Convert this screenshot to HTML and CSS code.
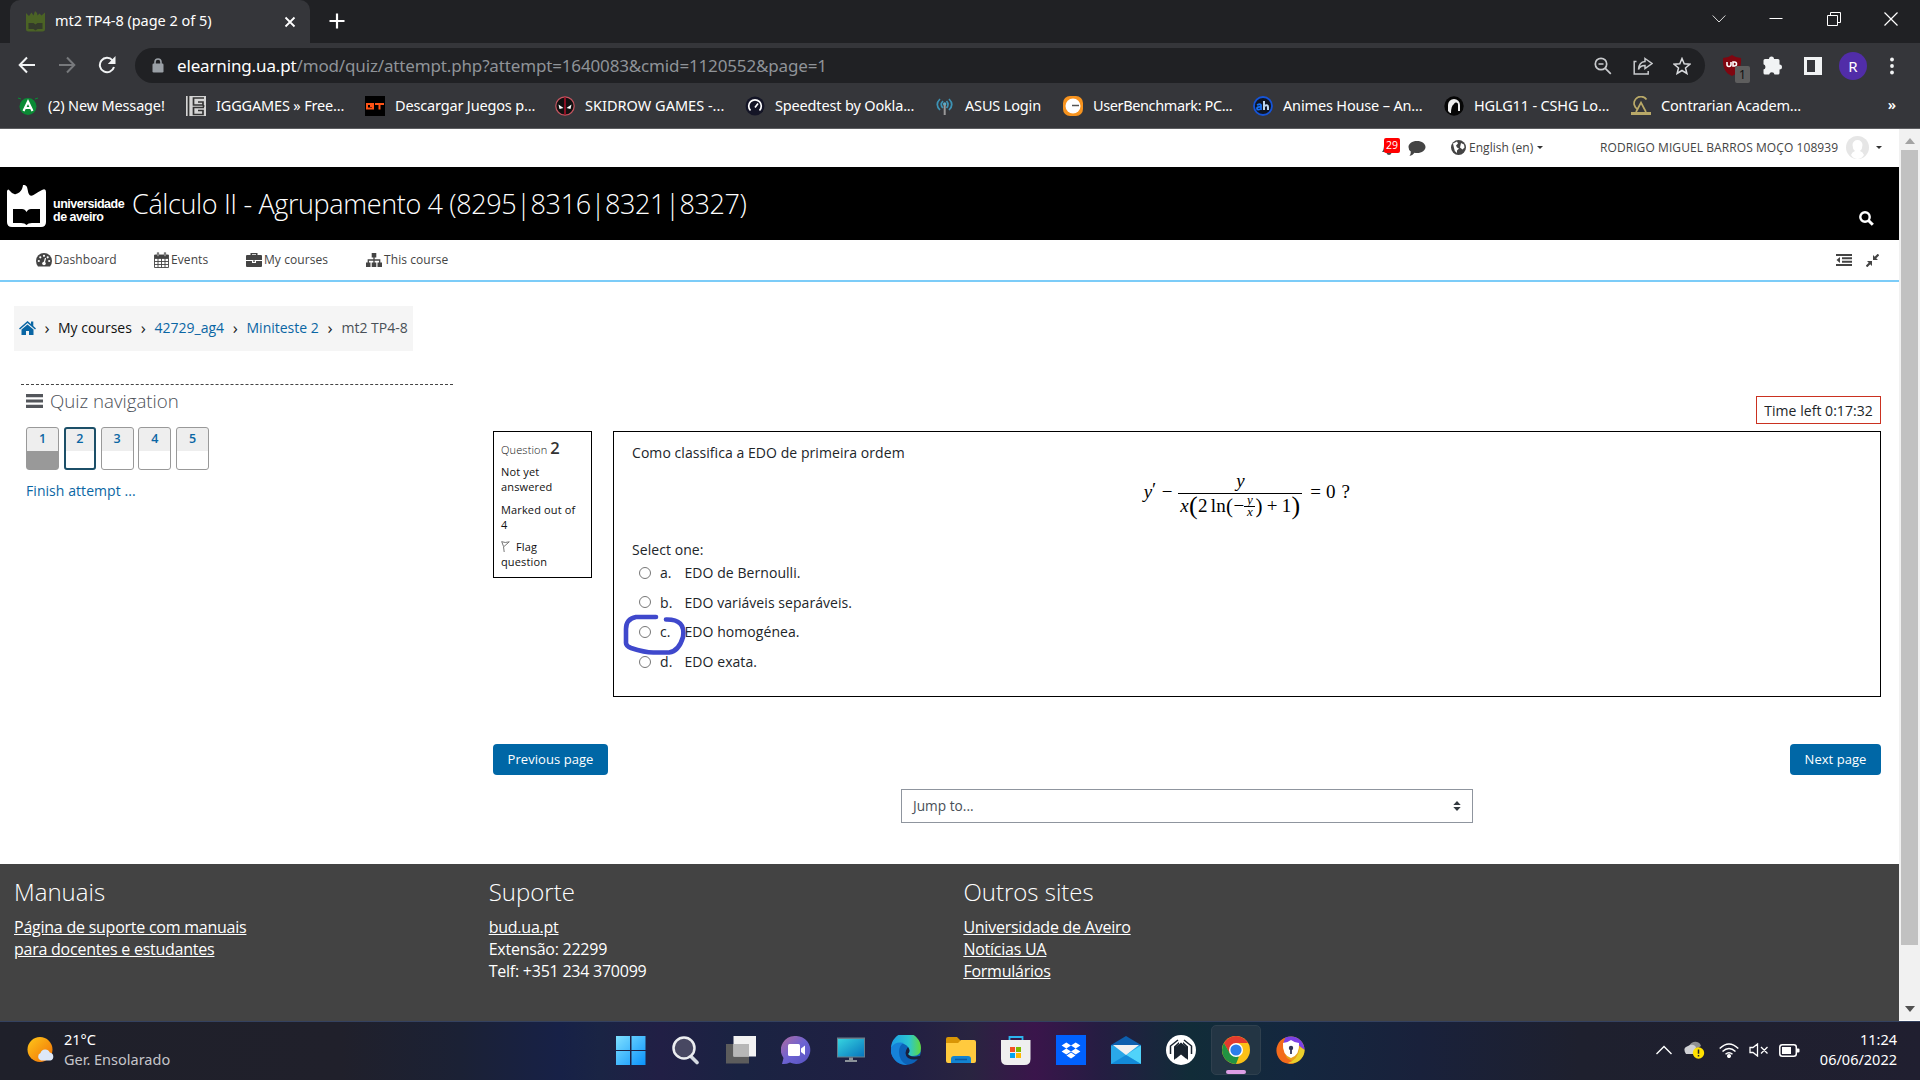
FILE: index.html
```html
<!DOCTYPE html>
<html lang="en">
<head>
<meta charset="utf-8">
<title>mt2 TP4-8 (page 2 of 5)</title>
<link rel="stylesheet" href="styles.css">
</head>
<body>
<div class="browser">
  <div class="tabstrip">
    <div class="tab">
      <svg class="favicon" width="21" height="21" viewBox="0 0 40 42"><path fill="#4b6325" d="M1 4l6 6 5-7 4 6 3-9 4 4 1 5 4-4 4 4 7-6v33q0 5-5 5H6q-5 0-5-5z"/><path fill="#343b2b" d="M6 24h10l4 3 4-3h10v12H24l-4 3-4-3H6z"/></svg>
      <span class="tab-title">mt2 TP4-8 (page 2 of 5)</span>
      <svg class="tab-close" width="12" height="12" viewBox="0 0 12 12"><path d="M1.500 1.500l9 9m0-9l-9 9" stroke="#fff" stroke-width="1.800"/></svg>
    </div>
    <svg class="newtab" width="16" height="16" viewBox="0 0 16 16"><path d="M8 .5v15M.5 8h15" stroke="#fff" stroke-width="2.200"/></svg>
    <div class="wincontrols">
      <svg width="14" height="14" viewBox="0 0 14 14"><path d="M.7 3.500l6.300 6.500 6.300-6.500" fill="none" stroke="#ddd"/></svg>
      <svg width="14" height="14" viewBox="0 0 14 14"><path d="M.5 6.500h13" stroke="#fff"/></svg>
      <svg width="14" height="14" viewBox="0 0 14 14"><path d="M.5 3.500h10v10H.5zM3.500 3.500V.5h10v10h-3" fill="none" stroke="#fff"/></svg>
      <svg width="14" height="14" viewBox="0 0 14 14"><path d="M.5.5l13 13m0-13l-13 13" stroke="#fff" stroke-width="1.200"/></svg>
    </div>
  </div>
  <div class="toolbar">
    <div class="navbtns">
      <svg width="18" height="18" viewBox="0 0 18 18"><path d="M17 9H2M9 1.500L1.700 9 9 16.500" fill="none" stroke="#f1f3f4" stroke-width="2"/></svg>
      <svg width="18" height="18" viewBox="0 0 18 18"><path d="M1 9h15M9 1.500L16.300 9 9 16.500" fill="none" stroke="#77797c" stroke-width="2"/></svg>
      <svg width="18" height="18" viewBox="0 0 18 18"><path d="M14.500 4.300A7.200 7.200 0 1 0 16 11" fill="none" stroke="#f1f3f4" stroke-width="2"/><path d="M17.500 0v8H9.800z" fill="#f1f3f4"/></svg>
    </div>
    <div class="omnibox">
      <svg class="lock" width="12" height="15" viewBox="0 0 12 15"><path d="M3 6V4a3 3 0 0 1 6 0v2" fill="none" stroke="#9aa0a6" stroke-width="1.600"/><rect x=".5" y="5.500" width="11" height="9" rx="1.200" fill="#9aa0a6"/></svg>
      <span class="url">elearning.ua.pt<span class="url-path">/mod/quiz/attempt.php?attempt=1640083&amp;cmid=1120552&amp;page=1</span></span>
      <span class="omni-icons">
        <svg width="18" height="18" viewBox="0 0 18 18" fill="none" stroke="#c8cacd" stroke-width="1.700"><circle cx="7" cy="7" r="5.700"/><path d="M11.300 11.300l5.500 5.500M4.500 7h5"/></svg>
        <svg width="20" height="18" viewBox="0 0 20 18" fill="none" stroke="#c8cacd" stroke-width="1.500"><path d="M3.500 4.500H1.200v12.500h14V14"/><path d="M12 1.500l7 5-7 5V8.500q-5 0-6.500 4Q6 5 12 4.500z"/></svg>
        <svg width="18" height="18" viewBox="0 0 18 18" fill="none" stroke="#d8dadd" stroke-width="1.500"><path d="M9 1.500l2.200 5.300 5.700.4-4.400 3.700 1.400 5.600L9 13.500l-4.900 3 1.400-5.600L1.100 7.200l5.700-.4z"/></svg>
      </span>
    </div>
    <div class="exts">
      <div class="ublock">
        <svg width="20" height="21" viewBox="0 0 20 21"><path fill="#800610" d="M10 0q4 3 9 3 1 14-9 18Q0 17 1 3q5 0 9-3z"/><path d="M5 7v2.500a2 2 0 0 0 4 0V7m2 0v4h1.500a2 2 0 0 0 0-4H11z" fill="none" stroke="#fff" stroke-width="1.600"/></svg>
        <span class="ublock-badge">1</span>
      </div>
      <svg class="puzzle" width="19" height="19" viewBox="0 0 19 19"><path fill="#f1f3f4" d="M6 3a2.500 2.500 0 0 1 5 0h4q1.500 0 1.500 1.500V8.500a2.500 2.500 0 0 1 0 5V17q0 1.500-1.500 1.500h-3.500a2.700 2.700 0 0 0-5.300 0H2Q.5 18.500.5 17v-3.500a2.700 2.700 0 0 0 0-5.200V4.500Q.5 3 2 3z"/></svg>
      <svg class="sidepanel" width="18" height="18" viewBox="0 0 18 18"><path fill="#f1f3f4" fill-rule="evenodd" d="M0 0h18v18H0zM3 3v12h8V3z"/></svg>
      <span class="profile">R</span>
      <svg class="menu-dots" width="4" height="18" viewBox="0 0 4 18" fill="#f1f3f4"><circle cx="2" cy="2.500" r="1.900"/><circle cx="2" cy="9" r="1.900"/><circle cx="2" cy="15.500" r="1.900"/></svg>
    </div>
  </div>
  <div class="bookmarks">
    <a class="bm w168"><svg viewBox="0 0 20 20"><circle cx="10" cy="10.500" r="8.500" fill="#0b8a35"/><path d="M0 2l3 1M20 2l-3 1" stroke="#0b8a35"/><path d="M5.500 15L10 5.500 14.500 15M7.500 12h5" fill="none" stroke="#fff" stroke-width="2.200"/></svg><span>(2) New Message!</span></a>
    <a class="bm w179"><svg viewBox="0 0 20 20"><path fill="#d4d4d4" d="M0 0h20v20H0z"/><path d="M2.500 0v20M18 2H7.500v7H17V6h-5M17.500 9v2M18 11.500H7.500v7H17v-4h-5" fill="none" stroke="#333" stroke-width="1.700"/></svg><span>IGGGAMES » Free...</span></a>
    <a class="bm w190"><svg viewBox="0 0 20 20"><path d="M0 0h20v20H0z"/><path d="M9 8H2v4.500h6V10H5M10 8h9M14.500 8v5.500" fill="none" stroke="#ff5316" stroke-width="2"/></svg><span>Descargar Juegos p...</span></a>
    <a class="bm w190 tight"><svg viewBox="0 0 20 20"><circle cx="10" cy="10" r="9.200" fill="#111" stroke="#c45560" stroke-width="1.200"/><path d="M10 1v18" stroke="#b0102a" stroke-width="1.500"/><path d="M3.500 8.500l5 3.500-4 1zM16.500 8.500l-5 3.500 4 1z" fill="#fff"/></svg><span class="wide">SKIDROW GAMES -...</span></a>
    <a class="bm w190"><svg viewBox="0 0 20 20"><circle cx="10" cy="10" r="9.500" fill="#141526"/><path d="M5.500 14.500a6.300 6.300 0 1 1 9 0M10 11.500l3-4" fill="none" stroke="#fff" stroke-width="1.700"/></svg><span>Speedtest by Ookla...</span></a>
    <a class="bm w128"><svg viewBox="0 0 20 20" fill="none" stroke="#3d93b5" stroke-width="1.700"><path d="M5 3Q-.5 8.500 5 14M8 5Q4.500 8.500 8 12M14 3q5.500 5.500 0 11M11.500 5q3 3.500 0 7"/><circle cx="9.700" cy="8" r="1.700" fill="#5ba9c4" stroke="none"/><path d="M9.700 9v10" stroke="#999" stroke-width="2"/></svg><span>ASUS Login</span></a>
    <a class="bm w190"><svg viewBox="0 0 20 20"><rect width="20" height="20" rx="7" fill="#f7931e"/><circle cx="10" cy="10" r="7.500" fill="#fff"/><path d="M9 9.500h7" stroke="#555" stroke-width="1.500"/></svg><span class="narrow">UserBenchmark: PC...</span></a>
    <a class="bm w191"><svg viewBox="0 0 20 20"><circle cx="10" cy="10" r="9" fill="#101522" stroke="#1554d8" stroke-width="1.800"/><path d="M4 9q3-1.500 4 0v5M8 11q-4-.5-4 1.500T8 13" fill="none" stroke="#176ff0" stroke-width="1.800"/><path d="M11 5v9M11 10q4-2 4 1v3" fill="none" stroke="#bed6ef" stroke-width="2"/></svg><span>Animes House – An...</span></a>
    <a class="bm w187"><svg viewBox="0 0 20 20"><circle cx="10" cy="10" r="9.700" fill="#060606"/><path d="M4 15V9a6 6 0 0 1 12 0v6h-2V9a2 2 0 0 0-4-1q-3 2-3 9H6z" fill="#eee"/></svg><span>HGLG11 - CSHG Lo...</span></a>
    <a class="bm"><svg viewBox="0 0 20 20" fill="none" stroke="#b9a968"><path d="M15.500 3.500A6.800 6.800 0 1 0 7 13.500" stroke-width="1.700"/><path d="M5 16l5-9.500L15 16" stroke-width="1.700"/><path d="M0 17.500h20" stroke-width="3"/></svg><span>Contrarian Academ...</span></a>
    <span class="bm-more">»</span>
  </div>
</div>

<div class="viewport">
<div class="page">
  <div class="userbar">
    <div class="bell">
      <svg width="14" height="16" viewBox="0 0 14 16"><path fill="#4a4a4a" d="M7 0q5 0 5 6 0 5 2 7H0q2-2 2-7 0-6 5-6zM4.500 14h5Q9 16 7 16t-2.500-2z"/></svg>
      <span class="bell-count">29</span>
    </div>
    <svg class="comment" width="18" height="15" viewBox="0 0 18 15"><path fill="#444" d="M9 0c5 0 8.500 2.700 8.500 6S14 12 9 12q-1.500 0-2.500-.3Q4.500 14.500 1.500 15q1.500-2 1.300-4.500Q.5 9 .5 6C.5 2.700 4 0 9 0z"/></svg>
    <svg class="globe" width="15" height="15" viewBox="0 0 15 15"><circle cx="7.500" cy="7.500" r="7.500" fill="#444"/><path fill="#fff" d="M2 3.500l4-2 1 2-2 2 1 2 2 1-2 2v2.500Q3 11 3 8zM10 3l3 1.500.5 3-2 2-2.500-2z"/></svg>
    <span class="lang">English (en)</span><i class="caret"></i>
    <span class="username">RODRIGO MIGUEL BARROS MOÇO 108939</span>
    <svg class="avatar" width="23" height="23" viewBox="0 0 23 23"><circle cx="11.500" cy="11.500" r="11.500" fill="#e6e6e6"/><path fill="#fff" d="M11.500 4a5 5 0 0 1 5 5q0 4-2.500 6 3 1 4 4-2.500 4-6.500 4T5 19q1-3 4-4-2.500-2-2.500-6a5 5 0 0 1 5-5z"/></svg>
    <i class="caret"></i>
  </div>
  <header class="banner">
    <svg class="ua-mark" width="39" height="42" viewBox="0 0 39 42"><path fill="#fff" d="M0 6q1-3 3 0 3 4 6 3 4-1 6-5Q16 1 16 0q4-.5 4.500 4 .5 4 2 6 1.500 1.500 4 0Q31 7 35 5q4-2 4 2v30q0 5-5 5H5q-5 0-5-5z"/><path d="M6 24h9q3 0 4.500 3Q21 24 24 24h9v14h-8q-4 0-5.500 2-1.500-2-5.500-2H6z"/></svg>
    <div class="ua-name">universidade<br>de aveiro</div>
    <h1>Cálculo II - Agrupamento 4 (8295|8316|8321|8327)</h1>
    <svg class="search" width="15" height="15" viewBox="0 0 15 15" fill="none" stroke="#fff"><circle cx="6" cy="6" r="4.700" stroke-width="2.400"/><path d="M9.500 9.500l4.300 4.300" stroke-width="3"/></svg>
  </header>
  <nav class="mainnav">
    <a class="n1"><svg width="16" height="14" viewBox="0 0 16 14"><path fill="#444" d="M2 13.500Q0 11 0 8a8 8 0 0 1 16 0q0 3-2 5.500z"/><g fill="#fff"><circle cx="2.800" cy="8" r="1.100"/><circle cx="4.300" cy="4.300" r="1.100"/><circle cx="8" cy="2.800" r="1.100"/><circle cx="11.700" cy="4.300" r="1.100"/><circle cx="13.200" cy="8" r="1.100"/></g><path d="M8 10.500l1.500-5.500" stroke="#fff" stroke-width="1.200"/><circle cx="8" cy="10.500" r="1.800" fill="#fff"/></svg><span>Dashboard</span></a>
    <a class="n2"><svg width="15" height="16" viewBox="0 0 15 16" fill="none" stroke="#444"><path d="M.5 3h14v12.500H.5zM.5 6.500h14M.5 9.500h14M.5 12.500h14M4 6v9.500M7.500 6v9.500M11 6v9.500" stroke-width=".9"/><path d="M1 3.500h13v2H1z" fill="#444"/><path d="M4 .5v4M11 .5v4" stroke-width="2.200"/><path d="M4 1.200v3M11 1.200v3" stroke="#fff" stroke-width=".7"/></svg><span>Events</span></a>
    <a class="n3"><svg width="16" height="14" viewBox="0 0 16 14"><path fill="#444" fill-rule="evenodd" d="M4.500 2V0h7v2H15q1 0 1 1v4H0V3q0-1 1-1zM6 1.300V2h4v-.7zM0 8h6v2h4V8h6v5q0 1-1 1H1q-1 0-1-1zM7 7.500h2v1.300H7z"/></svg><span>My courses</span></a>
    <a class="n4"><svg width="16" height="14" viewBox="0 0 16 14"><path fill="#444" d="M5.700 0h4.600v4.500h-4.600zM0 9.500h4.500V14H0zM5.700 9.500h4.600V14h-4.600zM11.500 9.500H16V14h-4.500z"/><path d="M8 4v6M2.300 10V7h11.400v3" fill="none" stroke="#444" stroke-width="1.300"/></svg><span>This course</span></a>
    <span class="navtools">
      <svg width="16" height="12" viewBox="0 0 16 12"><path d="M0 1h16M6 4.300h10M6 7.700h10M0 11h16" stroke="#444" stroke-width="1.900"/><path d="M4 3v6L.5 6z" fill="#444"/></svg>
      <svg width="13" height="13" viewBox="0 0 13 13"><path d="M12.500.5l-4 4M.5 12.500l4-4" stroke="#444" stroke-width="2.200"/><path d="M7 1v5h5zM6 12V7H1z" fill="#444"/></svg>
    </span>
  </nav>

  <ol class="crumbs">
    <li class="c1"><svg width="17" height="14" viewBox="0 0 17 14"><path fill="#0a66a4" d="M8.500 0L12 3V.5h2.300V5L17 7.400l-1 1L8.500 2 1 8.400l-1-1zM2.500 8.500l6-5 6 5V14H10v-4H7v4H2.500z"/></svg></li>
    <li class="c2">My courses</li>
    <li class="c3"><a>42729_ag4</a></li>
    <li class="c4"><a>Miniteste 2</a></li>
    <li class="c5">mt2 TP4-8</li>
  </ol>

  <div class="columns">
    <aside class="quiznav">
      <h2><svg width="17" height="14" viewBox="0 0 17 14"><path d="M0 1.700h17M0 7h17M0 12.300h17" stroke="#53565b" stroke-width="3.200"/></svg><span>Quiz navigation</span></h2>
      <div class="qbuttons">
        <a class="q done">1</a><a class="q current">2</a><a class="q">3</a><a class="q">4</a><a class="q">5</a>
      </div>
      <a class="finish">Finish attempt ...</a>
    </aside>
    <main>
      <div class="timer">Time left 0:17:32</div>
      <div class="question">
        <div class="info">
          <p class="qno">Question <b>2</b></p>
          <p>Not yet<br>answered</p>
          <p>Marked out of<br>4</p>
          <p><svg width="9" height="11" viewBox="0 0 9 11"><path d="M.7.5Q3 5 3.200 11M.7.7Q4 2.200 8.300.8L3 5.500" fill="none" stroke="#777"/></svg>Flag<br>question</p>
        </div>
        <div class="content">
          <p class="stem">Como classifica a EDO de primeira ordem</p>
          <div class="formula">
            <span class="lhs"><i>y</i><sup>′</sup></span><span class="op">−</span>
            <span class="frac">
              <span class="num"><i>y</i></span>
              <span class="den"><i>x</i><span class="big">(</span>2<span class="fn">ln</span><span class="mid">(</span>−<span class="sfrac"><i>y</i><i>x</i></span><span class="mid">)</span><span class="plus">+</span>1<span class="big">)</span></span>
            </span>
            <span class="rhs"><span class="eq">=</span>0<span class="qm">?</span></span>
          </div>
          <p class="prompt">Select one:</p>
          <div class="answers">
            <label><i class="radio"></i><span>a.</span>EDO de Bernoulli.</label>
            <label><i class="radio"></i><span>b.</span>EDO variáveis separáveis.</label>
            <label class="marked"><i class="radio"></i><span>c.</span>EDO homogénea.
              <svg class="scribble" width="66" height="44" viewBox="0 0 66 44"><path d="M33 4H13Q3 6 3 16v14q0 3 5 5 15 5 24 4.500h14Q56 38 60 24 63 6 43 6.500" fill="none" stroke="#3f48cc" stroke-width="4.600" stroke-linecap="round" stroke-linejoin="round"/></svg></label>
            <label><i class="radio"></i><span>d.</span>EDO exata.</label>
          </div>
        </div>
      </div>
      <div class="pager"><a class="btn prev">Previous page</a><a class="btn next">Next page</a></div>
      <div class="jump"><span>Jump to...</span><svg width="8" height="10" viewBox="0 0 8 10"><path fill="#343a40" d="M4 0l3.700 4H.3zM4 10L.3 6h7.400z"/></svg></div>
    </main>
  </div>

  <footer>
    <section><h3>Manuais</h3><p><u>Página de suporte com manuais</u><br><u>para docentes e estudantes</u></p></section>
    <section><h3>Suporte</h3><p><u>bud.ua.pt</u><br>Extensão: 22299<br>Telf: +351 234 370099</p></section>
    <section><h3>Outros sites</h3><p><u>Universidade de Aveiro</u><br><u>Notícias UA</u><br><u>Formulários</u></p></section>
  </footer>
</div>
<div class="scrollbar">
  <i class="up"></i><i class="thumb"></i><i class="down"></i>
</div>
</div>

<div class="taskbar">
  <div class="weather">
    <svg width="28" height="28" viewBox="0 0 28 28"><defs><linearGradient id="sun" x1="0" y1="0" x2="1" y2="1"><stop stop-color="#ffc81a"/><stop offset="1" stop-color="#f06d05"/></linearGradient></defs><circle cx="13" cy="13.500" r="12.500" fill="url(#sun)"/><path fill="#dde8f8" d="M14 24.500a4 4 0 0 1-.5-7.500 5 5 0 0 1 9.300-.6 4.200 4.200 0 0 1 .7 8.100z"/></svg>
    <div class="weather-text"><span>21°C</span><span class="dim">Ger. Ensolarado</span></div>
  </div>
  <div class="apps">
    <span><svg width="30" height="30" viewBox="0 0 30 30"><defs><linearGradient id="win" x1="0" y1="0" x2="1" y2="1"><stop stop-color="#7fe0ff"/><stop offset="1" stop-color="#0a93fb"/></linearGradient></defs><path fill="url(#win)" d="M0 1h14v14H0zM15.500 1h14v14h-14zM0 16h14v14H0zM15.500 16h14v14h-14z"/></svg></span>
    <span><svg width="30" height="30" viewBox="0 0 30 30"><path d="M19.500 21l6.500 6.500" stroke="#d5dae1" stroke-width="3.600" stroke-linecap="round"/><circle cx="13" cy="13" r="10.500" fill="#484862" stroke="#eceef1" stroke-width="2.500"/></svg></span>
    <span><svg width="30" height="30" viewBox="0 0 30 30"><path fill="#5c5c5c" d="M0 9h23v19.500H0z"/><path fill="#f2f2f2" d="M7.500 1H30v20.500H7.500z"/><path fill="#b7b7b7" d="M7.500 9H23v12.500H7.500z"/></svg></span>
    <span><svg width="30" height="30" viewBox="0 0 30 30"><defs><linearGradient id="chat" x1="0" y1="0" x2="1" y2="1"><stop stop-color="#b06a9e"/><stop offset=".5" stop-color="#6d63d2"/><stop offset="1" stop-color="#5652c0"/></linearGradient></defs><path fill="url(#chat)" d="M15.500 1A14 14 0 1 1 9 27.500Q5 29.500 1 29l1.500-6A14 14 0 0 1 15.500 1z"/><rect x="7" y="9" width="12" height="12" rx="1.500" fill="#fff"/><path d="M20 13.500l4-3v9.500l-4-3z" fill="#fff"/></svg></span>
    <span><svg width="30" height="30" viewBox="0 0 30 30"><defs><linearGradient id="rem" x1="0" y1="0" x2="1" y2="1"><stop stop-color="#35d3df"/><stop offset="1" stop-color="#0875be"/></linearGradient></defs><path fill="#667f8d" d="M1 2.500h28v20H1z"/><path fill="url(#rem)" d="M2 4h26v17.500H2z"/><path fill="#8b9299" d="M13 22.500h4v2.500h4v2H9v-2h4z"/></svg></span>
    <span><svg width="30" height="30" viewBox="0 0 30 30"><defs><linearGradient id="edge" x1="0" x2="1"><stop stop-color="#1c9de6"/><stop offset=".6" stop-color="#2cc6d0"/><stop offset="1" stop-color="#60d93d"/></linearGradient></defs><circle cx="15" cy="15" r="15" fill="#0c62b8"/><path fill="url(#edge)" d="M0 13A15 15 0 0 1 30 13q0 8-8 8-4 0-5-2 3-3 0-7Q10 4 0 13z"/><path fill="#1682d8" d="M0 13q4-7 13-5Q8 10 8 17q0 9 8 13Q4 30 0 18z"/><path fill="#1a1f3d" d="M17 12q3 4 0 7 3 4 11 2l2 0v2q-7 3-13 0-5-4.500 0-11z"/></svg></span>
    <span><svg width="30" height="30" viewBox="0 0 30 30"><path fill="#d89506" d="M0 4q0-2 2-2h9l4 4v5H0z"/><path fill="#ffca3e" d="M0 8h12l3-3h13q2 0 2 2v19q0 2-2 2H2q-2 0-2-2z"/><path fill="#1384d1" d="M5 28v-4q0-3 3-3h14q3 0 3 3v4z"/><path d="M9 24.500h12" stroke="#0a5aa2" stroke-width="1.500"/></svg></span>
    <span><svg width="30" height="30" viewBox="0 0 30 30"><path d="M8.500 6V2h13v4" fill="none" stroke="#2cb3ee" stroke-width="1.800"/><path fill="#efefef" d="M0 5h29.500v19q0 6-6 6H6q-6 0-6-6z"/><path fill="#f25022" d="M9 12h5v5H9z"/><path fill="#7fba00" d="M15 12h5v5h-5z"/><path fill="#00a4ef" d="M9 18h5v5H9z"/><path fill="#ffb900" d="M15 18h5v5h-5z"/></svg></span>
    <span><svg width="30" height="30" viewBox="0 0 30 30"><path fill="#0061fe" d="M0 0h30v30H0z"/><path fill="#fff" d="M10.300 7.500l4.700 3-4.700 3-4.700-3zM19.700 7.500l4.700 3-4.700 3-4.700-3zM10.300 13.500l4.700 3-4.700 3-4.700-3zM19.700 13.500l4.700 3-4.700 3-4.700-3zM15 17.600l4.500 2.900-4.500 3-4.500-3z"/></svg></span>
    <span><svg width="30" height="30" viewBox="0 0 30 30"><path fill="#0d5fae" d="M0 10L15 1l15 9v5H0z"/><path fill="#2aa8e8" d="M0 10.500h30V29H0z"/><path fill="#50d3fa" d="M30 10.500V29L15 20z"/><path fill="#138ad8" d="M0 29l15-9 15 9z"/><path fill="#f1f1f1" d="M2 10h26L15 20z"/></svg></span>
    <span><svg width="30" height="30" viewBox="0 0 30 30"><circle cx="15" cy="15" r="15" fill="#fff"/><path d="M4.500 19V11L12 5M25.500 19V11L18 5" fill="none" stroke="#19232e" stroke-width="1.500"/><path fill="#19232e" d="M8 25V11.500L13 7v2l-3 3v11zM22 25V11.500L17 7v2l3 3v11z"/><path fill="#19232e" d="M9.500 12L15 7.500l5.500 4.500v12L15 19.500 9.500 24z"/></svg></span>
    <span class="active"><svg width="30" height="30" viewBox="0 0 30 30"><circle cx="15" cy="15" r="14" fill="#fbc116"/><path fill="#e33b2e" d="M2.900 8A14 14 0 0 1 27.100 8H15l-6 11z"/><path fill="#229342" d="M2.900 8l6 10.500 9 3.200L15 29A14 14 0 0 1 2.900 8z"/><circle cx="15" cy="15" r="7" fill="#fff"/><circle cx="15" cy="15" r="5.600" fill="#2b7de9"/></svg></span>
    <span><svg width="30" height="30" viewBox="0 0 30 30"><circle cx="15" cy="15" r="13.500" fill="#e8a21a"/><path fill="#7b41e6" d="M9 2.800A13.500 13.500 0 0 1 28.500 15L20 8 7 8z"/><path fill="#f36b1c" d="M9 2.800Q5 12 11 23l8 5A13.500 13.500 0 0 1 9 2.800z"/><path fill="#e9cf2c" d="M28.500 15A13.500 13.500 0 0 1 12 28q10-3 12-16z"/><path fill="#fff" d="M15 5q4 3 8 3 1 12-8 15Q6 20 7 8q4 0 8-3z"/><circle cx="15" cy="13" r="2.200" fill="#2e3358"/><path d="M15 13v6" stroke="#2e3358" stroke-width="1.800"/></svg></span>
  </div>
  <div class="tray">
    <svg class="t1" width="16" height="10" viewBox="0 0 16 10"><path d="M.5 9L8 1.500 15.500 9" fill="none" stroke="#fff" stroke-width="1.400"/></svg>
    <svg class="t2" width="21" height="18" viewBox="0 0 21 18"><path fill="#8f9092" d="M5 5q3-5 8-4 3 .5 4 4L6 12z"/><path fill="#d0d1d4" d="M2 13Q-2 7 4 5q5-3 8 1l-2 7z"/><circle cx="14.500" cy="12" r="5.700" fill="#ffe100"/><path d="M14.500 8.500v4.300M14.500 14v1.500" stroke="#222" stroke-width="1.500"/></svg>
    <svg class="t3" width="20" height="15" viewBox="0 0 20 15" fill="none" stroke="#fff" stroke-width="1.500"><path d="M.7 5.500q9.300-9 18.600 0M3.500 8.500q6.500-6 13 0M6.500 11.200q3.500-3 7 0"/><circle cx="10" cy="13" r="1.300" fill="#fff"/></svg>
    <svg class="t4" width="20" height="14" viewBox="0 0 20 14" fill="none" stroke="#fff" stroke-width="1.300"><path d="M1 4.500h3L8.500 1v12L4 9.500H1zM12 4l6.500 6.500M18.500 4L12 10.500"/></svg>
    <svg class="t5" width="21" height="13" viewBox="0 0 21 13"><rect x=".8" y=".8" width="16.500" height="11.400" rx="2.500" fill="none" stroke="#fff" stroke-width="1.500"/><path fill="#fff" d="M3 3h9v7H3zM18 4.500h1.500q1 0 1 1v2q0 1-1 1H18z"/></svg>
    <div class="clock"><span>11:24</span><span>06/06/2022</span></div>
  </div>
</div>
</body>
</html>
```
FILE: styles.css
```css
* { box-sizing: border-box; }
body { margin: 0; width: 1920px; height: 1080px; overflow: hidden; display: flex; flex-direction: column; font-family: "Open Sans", "Noto Sans", sans-serif; background: #fff; color: #212529; }
svg { display: block; flex: none; }
p, h1, h2, h3, ol { margin: 0; padding: 0; font-weight: 400; }
span { white-space: nowrap; }

/* browser chrome */
.browser { height: 129px; flex: none; background: #35363a; border-bottom: 1px solid #5d5e61; font-family: "Noto Sans", "Open Sans", sans-serif; color: #fff; }
.tabstrip { height: 43px; background: #202124; display: flex; align-items: flex-start; padding-left: 10px; }
.tab { width: 300px; height: 43px; background: #35363a; border-radius: 10px 10px 0 0; display: flex; align-items: center; padding: 0 14px 0 15px; }
.tab-title { font-size: 14.500px; letter-spacing: -.03px; margin-left: 9px; padding-bottom: 3px; flex: 1; }
.newtab { margin: 13px 0 0 19px; }
.wincontrols { margin-left: auto; padding: 12px 22px 0 0; display: flex; gap: 43.500px; }
.toolbar { height: 45px; display: flex; align-items: center; padding-left: 18px; }
.navbtns { display: flex; gap: 22px; width: 117px; padding-bottom: 2px; }
.omnibox { width: 1570px; height: 35px; border-radius: 18px; background: #202124; display: flex; align-items: center; padding: 0 14px 0 17px; }
.url { margin-left: 13px; font-size: 17px; letter-spacing: -.15px; flex: 1; }
.url-path { color: #8f9398; }
.omni-icons { display: flex; gap: 20.500px; }
.exts { flex: 1; display: flex; align-items: center; padding-left: 17px; }
.ublock { position: relative; width: 41px; }
.ublock-badge { position: absolute; left: 13px; top: 11px; width: 15px; height: 17px; border-radius: 2px; background: #5e5e5e; color: #111; font-size: 12px; line-height: 17px; text-align: center; }
.sidepanel { margin-left: 22px; }
.profile { width: 28px; height: 28px; margin-left: 17px; border-radius: 50%; background: #512da8; font-size: 15px; line-height: 28px; text-align: center; }
.menu-dots { margin-left: 23px; }
.bookmarks { height: 40px; display: flex; align-items: center; padding: 0 24px 5px 18px; font-size: 14.500px; }
.bm { display: flex; align-items: center; gap: 10px; letter-spacing: -.16px; }
.bm svg { width: 20px; height: 20px; }
.bm span { padding-bottom: 1px; }
.bm .wide { letter-spacing: .02px; }
.bm .narrow { letter-spacing: -.38px; }
.w128 { width: 128px; } .w168 { width: 168px; } .w179 { width: 179px; } .w187 { width: 187px; } .w190 { width: 190px; } .w191 { width: 191px; }
.bm-more { margin-left: auto; padding-bottom: 3px; font-weight: 600; }

/* page */
.viewport { height: 892px; flex: none; display: flex; }
.page { width: 1899px; display: flex; flex-direction: column; }
.userbar { height: 38px; padding: 0 17px 2px 0; display: flex; align-items: center; justify-content: flex-end; font-size: 12px; color: #444; }
.bell { position: relative; width: 26px; }
.bell-count { position: absolute; left: 2px; top: -1px; width: 16px; height: 15px; border-radius: 2px; background: #f00; color: #fff; font-size: 10.500px; line-height: 15px; text-align: center; }
.comment { position: relative; top: 1px; }
.globe { margin: 0 3px 0 25px; }
.lang { width: 66px; letter-spacing: .03px; }
.caret { width: 0; border: 3.500px solid transparent; border-top-color: #333; border-bottom: 0; margin-left: 2px; }
.username { margin-left: 57px; width: 241px; letter-spacing: .08px; }
.avatar { margin: 0 5px 0 5px; }
.banner { height: 73px; background: #000; color: #fff; display: flex; padding: 18px 25px 0 7px; }
.ua-name { margin: 13px 0 0 7px; width: 79px; font: bold 12.500px/12.500px "Liberation Sans", sans-serif; letter-spacing: -.5px; }
.banner h1 { font-size: 27px; line-height: 37px; font-weight: 300; white-space: nowrap; letter-spacing: -.37px; }
.search { margin: 26px 0 0 auto; }
.mainnav { height: 42px; border-bottom: 2px solid #7cccf8; padding: 0 20px 0 36px; display: flex; align-items: center; font-size: 12px; letter-spacing: .08px; color: #444; }
.mainnav a { display: flex; align-items: center; gap: 2px; }
.mainnav a span { padding-bottom: 1px; }
.n1 { width: 118px; } .n2 { width: 92px; } .n3 { width: 120px; }
.navtools { margin-left: auto; display: flex; align-items: center; gap: 14px; }
.crumbs { list-style: none; margin: 24px 0 0 14px; width: 399px; height: 45px; background: #f5f5f5; display: flex; align-items: center; padding: 0 0 2px 5px; font-size: 14px; white-space: nowrap; }
.crumbs li { display: flex; align-items: center; }
.crumbs li:not(:last-child)::after { content: "›"; margin: 0 auto; font-size: 17px; color: #222; }
.crumbs a, .finish { color: #0a66a4; }
.c1 { width: 39px; } .c2 { width: 96.500px; color: #111; } .c3 { width: 92px; } .c4 { width: 95px; } .c5 { color: #495057; }
.columns { display: flex; height: 513px; }
.quiznav { width: 432px; margin: 33px 40px 0 21px; border-top: 1px dashed #444; padding-left: 5px; }
.quiznav h2 { display: flex; align-items: center; gap: 7px; font-size: 18.700px; font-weight: 300; line-height: 32px; height: 32px; color: #4c5058; }
.qbuttons { display: flex; gap: 4.800px; margin-top: 10px; }
.q { width: 33px; height: 43px; border: 1px solid #999; border-radius: 3px; background: linear-gradient(#eee 23px, #fff 23px); color: #0a66a4; font-size: 12.500px; font-weight: 600; line-height: 21px; text-align: center; }
.q.done { background: linear-gradient(#eee 23px, #999 23px); }
.q.current { width: 32px; border: 2px solid #1c4f68; background: linear-gradient(#eee 22px, #fff 22px); line-height: 19px; }
.finish { display: block; margin-top: 11px; font-size: 14px; letter-spacing: .06px; line-height: 20px; }
main { width: 1388px; padding-top: 45px; display: flex; flex-direction: column; }
.timer { align-self: flex-end; width: 125px; height: 28px; border: 1px solid #ca3120; font-size: 14px; line-height: 27px; text-align: center; letter-spacing: .04px; }
.question { margin-top: 7px; display: flex; gap: 21px; align-items: flex-start; }
.info { width: 99px; height: 147px; border: 1px solid #000; padding: 8px 7px 0; font-size: 11px; letter-spacing: .14px; line-height: 15px; color: #111; }
.info p { margin-bottom: 7.500px; white-space: nowrap; }
.info .qno { line-height: 16px; margin-bottom: 6px; font-weight: 300; }
.qno b { font-size: 16.500px; font-weight: 600; color: #333; }
.info svg { display: inline-block; margin-right: 6px; vertical-align: -1px; }
.content { width: 1268px; height: 266px; border: 1px solid #000; padding: 10px 18px 0; font-size: 14px; letter-spacing: .06px; }
.stem, .prompt { line-height: 22px; }
.formula { height: 52px; margin: 6px 0 17px; display: flex; align-items: flex-start; justify-content: center; font-family: "Liberation Serif", serif; font-size: 19px; letter-spacing: 0; line-height: 20px; color: #000; }
.lhs, .op, .rhs { padding-top: 12px; }
.lhs { width: 15px; } .lhs sup { font-size: 19px; line-height: 0; vertical-align: 2px; }
.op { margin: 0 6px 0 3px; }
.frac { display: flex; flex-direction: column; align-items: center; }
.num { height: 23px; padding-top: 1px; }
.den { border-top: 1.500px solid #000; width: 124px; height: 25px; display: flex; align-items: center; justify-content: center; letter-spacing: .3px; }
.big { font-size: 26px; } .mid { font-size: 21px; } .fn { margin-left: 3px; }
.sfrac { display: flex; flex-direction: column; font-size: 13px; line-height: 10px; align-items: center; width: 11px; }
.sfrac i:first-child { border-bottom: 1px solid #000; width: 11px; padding-bottom: 1px; text-align: center; }
.plus { margin: 0 4px; }
.rhs { width: 48px; padding-left: 8px; } .eq { margin-right: 5px; } .qm { margin-left: 6px; }
.answers label { display: flex; align-items: center; height: 29.600px; padding-left: 7px; position: relative; white-space: nowrap; }
.answers { margin-top: -3px; }
.radio { width: 12px; height: 12px; border: 1px solid #767676; border-radius: 50%; margin-right: 9px; }
.answers label > span { width: 24.500px; }
.scribble { position: absolute; left: -9px; top: -4px; }
.pager { margin-top: 47px; display: flex; justify-content: space-between; }
.btn { height: 31px; border-radius: 4px; background: #0067a6; color: #fff; font-size: 13px; letter-spacing: .05px; line-height: 30px; text-align: center; }
.prev { width: 115px; } .next { width: 91px; }
.jump { width: 572px; height: 34px; margin: 14px 0 0 408px; border: 1px solid #8f959e; display: flex; align-items: center; justify-content: space-between; padding: 0 11px; font-size: 13.700px; color: #495057; }
.jump span { padding-bottom: 1px; }
footer { height: 157px; background: #434343; color: #fff; padding: 10px 14px; display: flex; }
footer section { width: 474.700px; }
footer h3 { font-size: 24px; font-weight: 300; line-height: 36px; }
footer p { font-size: 16px; line-height: 22px; margin-top: 6px; white-space: nowrap; letter-spacing: -.24px; }
.scrollbar { width: 21px; height: 891px; background: #f1f1f1; display: flex; flex-direction: column; align-items: center; }
.up { border: 5px solid transparent; border-top: 0; border-bottom: 6px solid #a3a3a3; margin-top: 9px; }
.thumb { width: 17px; height: 795px; margin-top: 6px; background: #c1c1c1; }
.down { border: 5px solid transparent; border-bottom: 0; border-top: 6px solid #505050; margin: auto 0 8px; }

/* taskbar */
.taskbar { height: 59px; flex: none; display: flex; align-items: center; padding-bottom: 2px; color: #fff; font-family: "Noto Sans", "Open Sans", sans-serif; font-size: 14.500px; border-top: 1px solid #34415f; background: linear-gradient(90deg, #1f202a 0, #20202b 340px, #1b2135 460px, #172147 560px, #1a2444 600px, #211f45 660px, #1a2342 740px, #211f43 900px, #292440 970px, #3a154b 1035px, #251d42 1100px, #112c38 1190px, #14273f 1290px, #19213b 1420px, #1e202e 1580px, #201f30 1920px); }
.weather { display: flex; align-items: center; width: 603px; padding-left: 27px; gap: 9px; }
.weather-text, .clock { display: flex; flex-direction: column; line-height: 20px; padding-bottom: 2px; }
.dim { color: #c5c5ca; }
.apps { display: flex; height: 58px; align-items: center; }
.apps span { width: 50px; height: 50px; margin-right: 5px; display: grid; place-items: center; }
.apps span:first-child { margin-left: 3px; }
.apps .active { background: #233544; border: 1px solid #2f404e; border-radius: 5px; position: relative; }
.active::after { content: ""; position: absolute; left: 14px; bottom: 0; width: 20px; height: 4px; border-radius: 2px; background: #dd9fe6; }
.tray { margin-left: auto; padding-right: 23px; display: flex; align-items: center; }
.t2 { margin-left: 12px; } .t3 { margin-left: 14px; } .t4 { margin-left: 10px; } .t5 { margin-left: 10px; }
.clock { width: 97px; text-align: right; }
```
